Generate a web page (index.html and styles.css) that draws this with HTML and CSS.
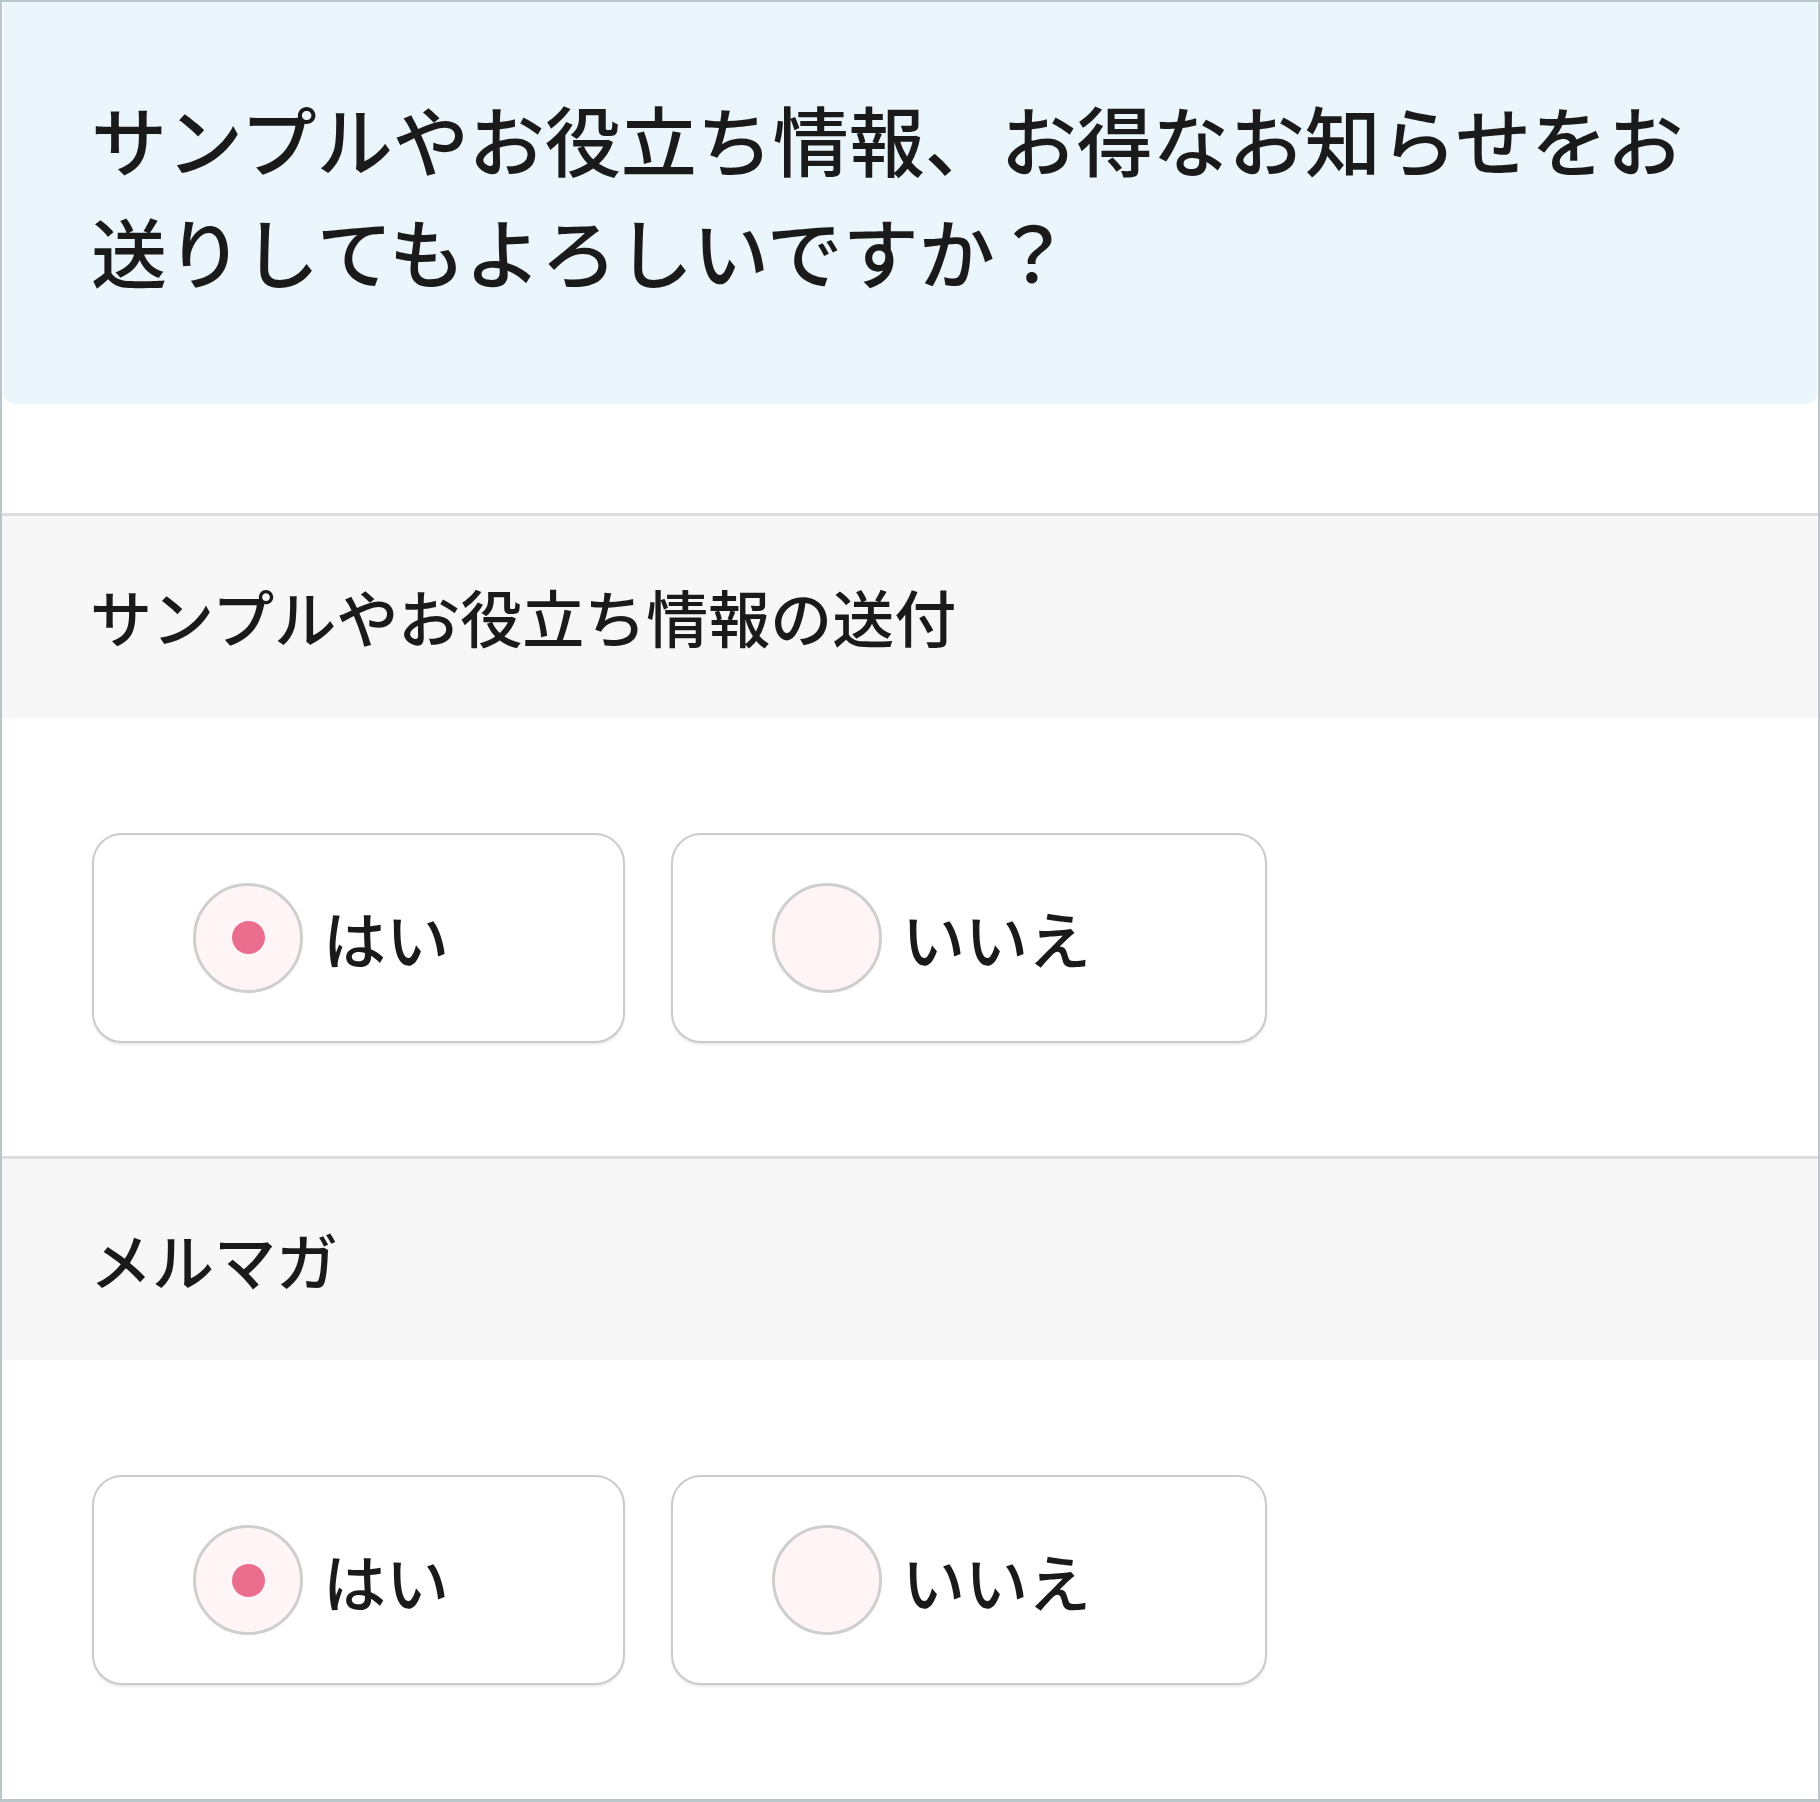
FILE: index.html
```html
<!DOCTYPE html>
<html lang="ja">
<head>
  <meta charset="UTF-8" />
  <meta name="viewport" content="width=device-width, initial-scale=1.0" />
  <title>お知らせ設定</title>
  <link rel="stylesheet" href="styles.css">
</head>
<body>
  <div class="frame">
    <!-- 質問 -->
    <div class="notice">
      <p>サンプルやお役立ち情報、お得なお知らせをお送りしてもよろしいですか？</p>
    </div>

    <!-- サンプル送付 -->
    <section class="field">
      <h2 class="field-title">サンプルやお役立ち情報の送付</h2>
      <div class="choices">
        <label class="choice">
          <input type="radio" name="sample" value="yes" checked>
          <span class="mark"></span>
          <span class="choice-text">はい</span>
        </label>
        <label class="choice">
          <input type="radio" name="sample" value="no">
          <span class="mark"></span>
          <span class="choice-text">いいえ</span>
        </label>
      </div>
    </section>

    <!-- メルマガ -->
    <section class="field">
      <h2 class="field-title">メルマガ</h2>
      <div class="choices">
        <label class="choice">
          <input type="radio" name="mailmag" value="yes" checked>
          <span class="mark"></span>
          <span class="choice-text">はい</span>
        </label>
        <label class="choice">
          <input type="radio" name="mailmag" value="no">
          <span class="mark"></span>
          <span class="choice-text">いいえ</span>
        </label>
      </div>
    </section>
  </div>
</body>
</html>
```

FILE: styles.css
```css
body {
  margin: 0;
  padding: 0;
  background: #fff;
  font-family: "Noto Sans CJK JP", "Noto Sans", sans-serif;
  font-weight: 500;
  color: #1a1a1a;
}
.frame {
  box-sizing: border-box;
  width: 1820px;
  height: 1802px;
  border: 2px solid #b9c7cb;
  border-bottom-width: 3px;
  overflow: hidden;
  background: #fff;
}
/* 質問ボックス */
.notice {
  margin: 0 1px 109px;
  padding: 80px 80px 97px 88px;
  background: #eaf6fc;
  border-radius: 0 0 12px 12px;
}
.notice p {
  margin: 0;
  font-size: 76px;
  line-height: 1.48;
}
/* 項目 */
.field-title {
  margin: 0;
  padding: 55px 88px 55px;
  border-top: 3px solid #dddddd;
  background: #f7f7f7;
  font-size: 62px;
  font-weight: 500;
  line-height: 1.48;
}
.choices {
  display: flex;
  gap: 46px;
  padding: 115px 90px 113px;
}
.choice {
  display: flex;
  align-items: center;
  gap: 20px;
  height: 210px;
  box-sizing: border-box;
  padding: 0 174px 0 99px;
  border: 2px solid #cbcbcb;
  border-radius: 30px;
  box-shadow: 0 2px 2px rgba(0, 0, 0, 0.08);
  background: #fff;
  cursor: pointer;
}
.choice input {
  display: none;
}
/* ラジオの丸 */
.mark {
  box-sizing: border-box;
  width: 110px;
  height: 110px;
  border: 3px solid #cfcfcf;
  border-radius: 50%;
  background: #fff5f7;
  display: flex;
  justify-content: center;
  align-items: center;
}
.choice input:checked + .mark::after {
  content: "";
  width: 33px;
  height: 33px;
  border-radius: 50%;
  background: #ea6d8e;
}
.choice-text {
  font-size: 63px;
  line-height: 1.5;
}
```
